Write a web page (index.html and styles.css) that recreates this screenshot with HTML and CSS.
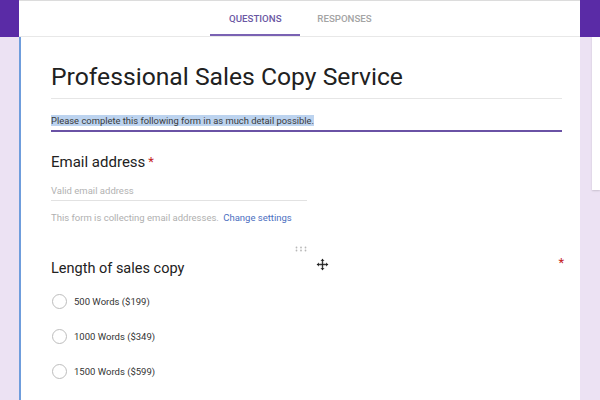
FILE: index.html
```html
<!DOCTYPE html>
<html>
<head>
<meta charset="utf-8">
<link rel="stylesheet" href="styles.css">
</head>
<body>
<div class="top">
  <div class="purple left"></div>
  <div class="tabs">
    <div class="tab active">QUESTIONS</div>
    <div class="tab">RESPONSES</div>
  </div>
  <div class="purple right"></div>
</div>
<div class="main">
  <div class="gutter"></div>
  <div class="card">
    <h1 class="title">Professional Sales Copy Service</h1>
    <div class="desc"><span class="sel">Please complete this following form in as much detail possible.</span></div>
    <div class="question">
      <div class="qtitle">Email address<span class="req">*</span></div>
      <div class="input">Valid email address</div>
      <div class="note">This form is collecting email addresses. <span class="link">Change settings</span></div>
    </div>
    <div class="question q2">
      <div class="handle">
        <svg width="12" height="6" viewBox="0 0 12 6"><g fill="#b8b8b8"><circle cx="1.5" cy="1.5" r="0.9"/><circle cx="6" cy="1.5" r="0.9"/><circle cx="10.5" cy="1.5" r="0.9"/><circle cx="1.5" cy="4.5" r="0.9"/><circle cx="6" cy="4.5" r="0.9"/><circle cx="10.5" cy="4.5" r="0.9"/></g></svg>
      </div>
      <div class="cursor">
        <svg width="13" height="13" viewBox="0 0 13 13"><path d="M6.5 0.5 L9 3 H7.4 V5.6 H10 V4 L12.5 6.5 L10 9 V7.4 H7.4 V10 H9 L6.5 12.5 L4 10 H5.6 V7.4 H3 V9 L0.5 6.5 L3 4 V5.6 H5.6 V3 H4 Z" fill="#222" stroke="#fff" stroke-width="0.6"/></svg>
      </div>
      <div class="qrow">
        <div class="qtitle small">Length of sales copy</div>
        <span class="req right-req">*</span>
      </div>
      <div class="opts">
        <label class="opt"><span class="radio"></span>500 Words ($199)</label>
        <label class="opt"><span class="radio"></span>1000 Words ($349)</label>
        <label class="opt"><span class="radio"></span>1500 Words ($599)</label>
      </div>
    </div>
  </div>
  <div class="side">
    <div class="sidecard"></div>
  </div>
</div>
</body>
</html>
```
FILE: styles.css
```css
* { box-sizing: border-box; }
html, body { margin: 0; padding: 0; }
body {
  width: 600px;
  height: 400px;
  overflow: hidden;
  background: #ece2f3;
  font-family: Roboto, "Liberation Sans", Arial, sans-serif;
  color: #202020;
}
.top {
  display: flex;
  height: 37px;
}
.purple { background: #5a2ba6; }
.purple.left { width: 19px; }
.purple.right { width: 20px; }
.tabs {
  flex: 1;
  background: #fff;
  border-top: 1px solid #dcdcdc;
  border-bottom: 1px solid #e8e8e8;
  display: flex;
  justify-content: center;
}
.tab {
  font-size: 9.7px;
  font-weight: 500;
  color: #a4a4a4;
  display: flex;
  align-items: center;
  justify-content: center;
  padding: 2px 17px 0;
  height: 35px;
  border-bottom: 2px solid transparent;
}
.tab.active {
  color: #6b57a3;
  border-bottom-color: #7a62b3;
  width: 90px;
  padding: 2px 0 0;
}
.main {
  display: flex;
  height: 363px;
}
.gutter { width: 19px; }
.card {
  width: 561px;
  background: #fff;
  border-left: 2px solid #6f9ddc;
  padding: 22px 18px 0 30px;
  position: relative;
}
.side {
  width: 20px;
  padding-left: 12px;
}
.sidecard {
  height: 153px;
  background: #fff;
  box-shadow: 0 1px 2px rgba(0,0,0,0.15);
}
.title {
  margin: 0;
  font-size: 24.7px;
  font-weight: 400;
  line-height: 36px;
  color: #212121;
  padding-bottom: 3px;
  border-bottom: 1px solid #e6e6e6;
}
.desc {
  margin-top: 15px;
  font-size: 9.4px;
  line-height: 13px;
  color: #3a3a3a;
  padding-bottom: 3px;
  border-bottom: 2px solid #6a52a5;
}
.sel { background: #bcd3ef; }
.question { margin-top: 20px; }
.qtitle {
  font-size: 15px;
  line-height: 20px;
  color: #222;
}
.req { color: #c5221f; font-size: 13px; vertical-align: top; margin-left: 3px; }
.input {
  margin-top: 13px;
  width: 256px;
  font-size: 9.5px;
  color: #b2b2b2;
  padding-bottom: 4px;
  border-bottom: 1px solid #e2e2e2;
}
.note {
  margin-top: 11px;
  font-size: 9.5px;
  color: #b0b0b0;
}
.link { color: #4c6fbf; margin-left: 2px; }
.q2 { margin-top: 36px; position: relative; }
.handle {
  position: absolute;
  left: 244px;
  top: -22px;
}
.cursor {
  position: absolute;
  left: 265px;
  top: -3px;
}
.qrow {
  display: flex;
  justify-content: space-between;
  align-items: flex-start;
}
.qtitle.small { font-size: 14.5px; }
.right-req { margin-top: -4px; margin-right: -2px; }
.opts {
  margin-top: 13px;
  display: flex;
  flex-direction: column;
  gap: 17px;
}
.opt {
  display: flex;
  align-items: center;
  font-size: 9.5px;
  color: #333;
  height: 18px;
}
.radio {
  width: 15px;
  height: 15px;
  border: 1.5px solid #bdbdbd;
  border-radius: 50%;
  margin-left: 1px;
  margin-right: 7px;
}
```
